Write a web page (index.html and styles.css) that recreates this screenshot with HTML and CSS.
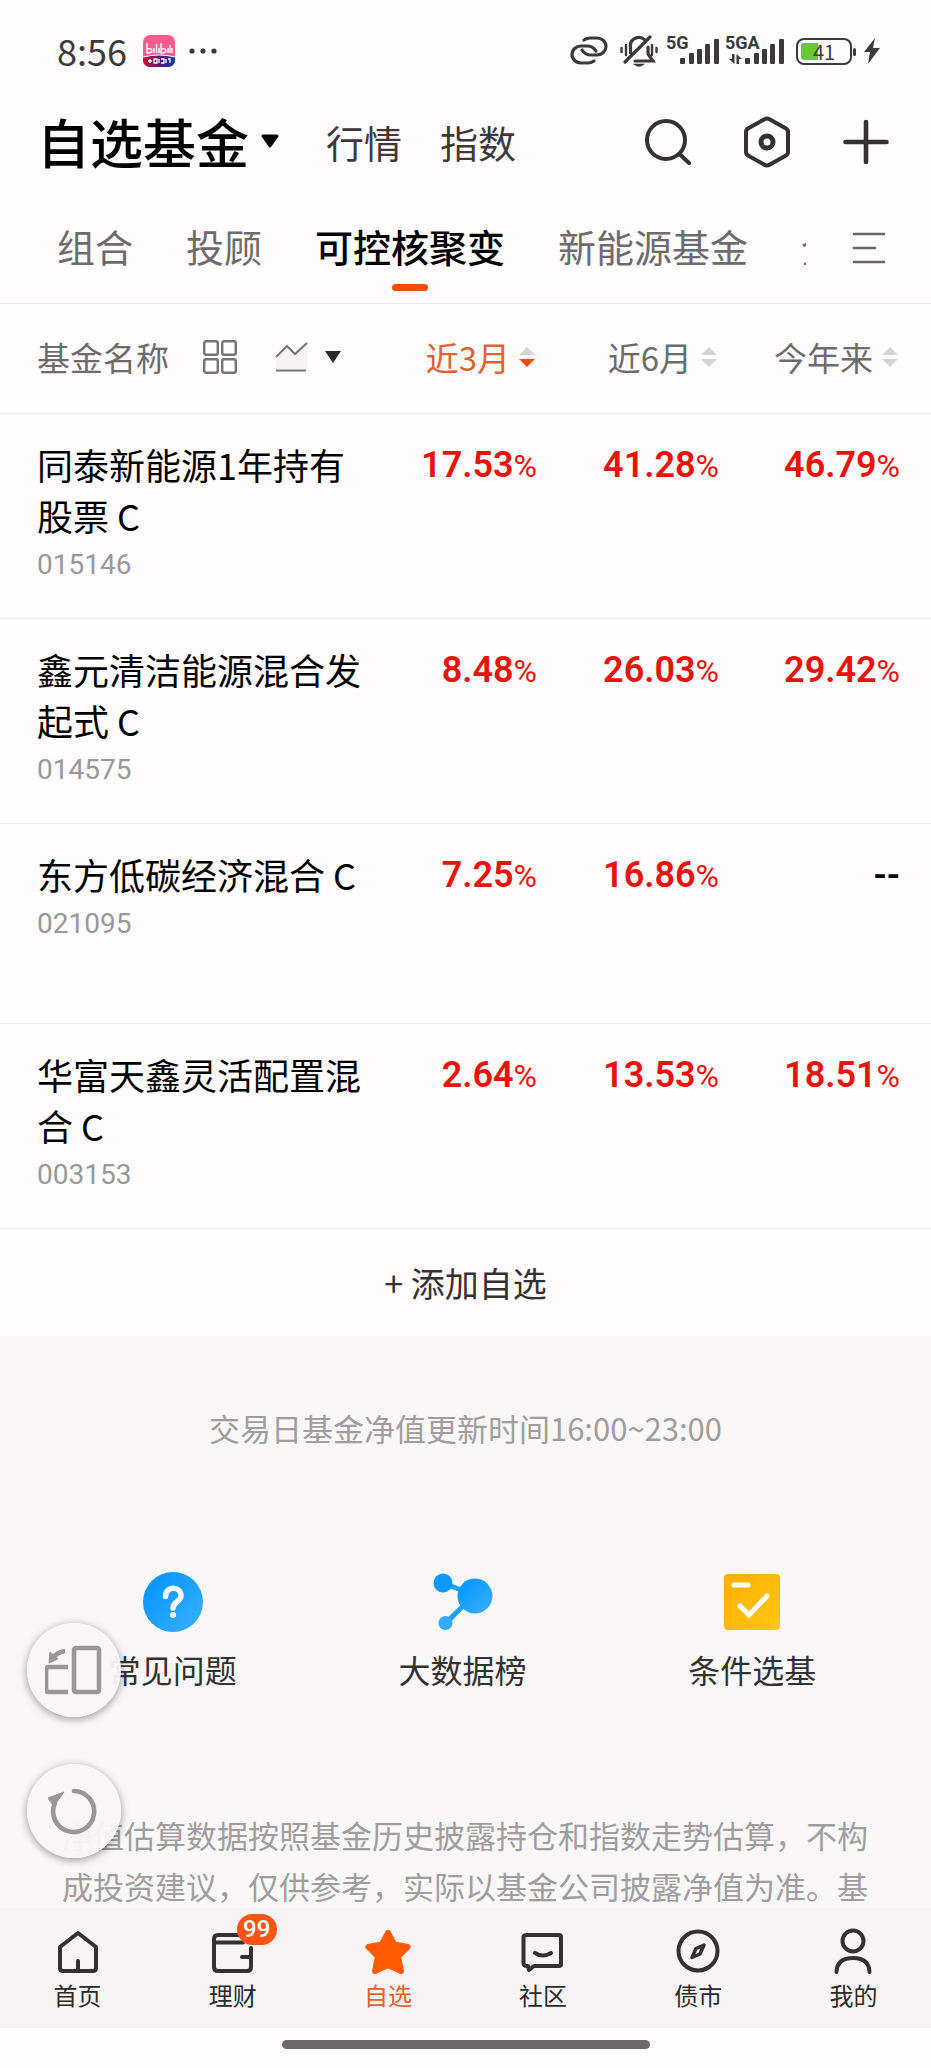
FILE: index.html
```html
<!DOCTYPE html>
<html lang="zh-CN">
<head>
    <meta charset="UTF-8">
    <meta name="viewport" content="width=device-width, initial-scale=1.0">
    <title>自选基金</title>
    <link rel="stylesheet" href="styles.css">
</head>
<body>
    <div class="status-bar">
        <span class="time">8:56</span>
        <svg class="app-icon" width="32" height="32" viewBox="0 0 32 32">
            <defs>
                <linearGradient id="band" x1="0" x2="1">
                    <stop offset="0" stop-color="#d0103c"/>
                    <stop offset="0.5" stop-color="#5a1a70"/>
                    <stop offset="1" stop-color="#0a3cb0"/>
                </linearGradient>
                <clipPath id="app-clip"><rect width="32" height="32" rx="7"/></clipPath>
            </defs>
            <g clip-path="url(#app-clip)">
                <rect width="32" height="32" fill="#fb5b91"/>
                <path d="M0 22Q16 18 32 22V32H0Z" fill="url(#band)"/>
                <path d="M0 22Q16 18 32 22" fill="none" stroke="#fff" stroke-width="1"/>
            </g>
            <path d="M4 8V18Q9 18 9 15.500T4 14M11 13V18M13.500 9V18M16 13V18M18 8V18Q23 18 23 15.500T18 14M25 13V18M27 10V18M29 13V18" fill="none" stroke="#fff" stroke-width="1.400"/>
            <path d="M5 26H9M7 24V28M11 24H14V28H11ZM16 24V28M18 24H21V28H18M23 24V28M25 24H27V28" fill="none" stroke="#fff" stroke-width="1.300"/>
        </svg>
        <svg class="dots" width="28" height="6" viewBox="0 0 28 6" fill="#3d3a3b">
            <circle cx="3" cy="3" r="2.600"/><circle cx="14" cy="3" r="2.600"/><circle cx="25" cy="3" r="2.600"/>
        </svg>
        <div class="status-icons">
            <svg width="38" height="30" viewBox="0 0 38 30" fill="none" stroke="#3d3a3b" stroke-width="3.200" stroke-linecap="round">
                <path d="M14 4Q17 2 20 2H27A9 8.500 0 0 1 27 19H21Q15 19 12 14"/>
                <path d="M24 25Q21 27 18 27H11A9 8.500 0 0 1 11 10H17Q23 10 26 15"/>
            </svg>
            <svg width="38" height="32" viewBox="0 0 38 32" fill="none" stroke="#3d3a3b" stroke-width="3.200" stroke-linecap="round">
                <path d="M1.500 13V17M6 10V20M32 10V20M36.500 13V17" stroke-width="2.400"/>
                <path d="M10.500 18V12A8.500 8.500 0 0 1 25 5M28 12V19L33 26H15M5 27L30 2"/>
                <path d="M15 29.500Q19 32.500 23 29.500Z" fill="#3d3a3b" stroke-width="1.500"/>
            </svg>
            <span class="net">
                <span class="net-label">5G</span>
                <svg width="39" height="25" viewBox="0 0 39 25" fill="#3d3a3b">
                    <rect x="0" y="19" width="5" height="6" rx="1"/><rect x="9" y="14" width="5" height="11" rx="1"/><rect x="17" y="10" width="5" height="15" rx="1"/><rect x="25" y="5" width="5" height="20" rx="1"/><rect x="34" y="0" width="5" height="25" rx="1"/>
                </svg>
            </span>
            <span class="net net-wide">
                <span class="net-label">5GA</span>
                <svg width="55" height="25" viewBox="0 0 55 25" fill="#3d3a3b">
                    <path d="M0 20H3V15H5.500V25ZM13 20H10V25H7.500V15Z"/>
                    <rect x="16" y="19" width="5" height="6" rx="1"/><rect x="25" y="14" width="5" height="11" rx="1"/><rect x="33" y="10" width="5" height="15" rx="1"/><rect x="41" y="5" width="5" height="20" rx="1"/><rect x="50" y="0" width="5" height="25" rx="1"/>
                </svg>
            </span>
            <span class="battery"><span class="battery-level">41</span></span>
            <svg width="16" height="26" viewBox="0 0 16 26" fill="#3d3a3b"><path d="M11 0L0 14H6L4 26L16 10H9Z"/></svg>
        </div>
    </div>

    <header class="header">
        <button class="title">自选基金
            <svg width="18" height="14" viewBox="0 0 18 14"><path d="M2 2H16L9 12Z" fill="#000" stroke="#000" stroke-width="3" stroke-linejoin="round"/></svg>
        </button>
        <a class="head-link" href="#">行情</a>
        <a class="head-link" href="#">指数</a>
        <div class="head-actions">
            <button aria-label="搜索">
                <svg width="46" height="46" viewBox="0 0 46 46" fill="none" stroke="#353132" stroke-width="4" stroke-linecap="round"><circle cx="21" cy="21" r="19"/><path d="M34.500 35L44 44"/></svg>
            </button>
            <button aria-label="设置">
                <svg width="46" height="52" viewBox="0 0 46 52" fill="none" stroke="#353132" stroke-linejoin="round"><path d="M20.500 3.200Q23 1.700 25.500 3.200L42 12.500Q44 13.700 44 16V36Q44 38.300 42 39.500L25.500 48.800Q23 50.300 20.500 48.800L4 39.500Q2 38.300 2 36V16Q2 13.700 4 12.500Z" stroke-width="4"/><circle cx="23" cy="26" r="6" stroke-width="5"/></svg>
            </button>
            <button aria-label="添加">
                <svg width="46" height="46" viewBox="0 0 46 46" stroke="#353132" stroke-width="4.600" stroke-linecap="round"><path d="M23 3V43M2.500 23H43.500"/></svg>
            </button>
        </div>
    </header>

    <nav class="tabs">
        <div class="tab-list">
            <a href="#">组合</a>
            <a href="#">投顾</a>
            <a href="#" class="active">可控核聚变</a>
            <a href="#">新能源基金</a>
            <a href="#">全部</a>
        </div>
        <button class="tab-menu" aria-label="分组">
            <svg width="34" height="32" viewBox="0 0 34 32" stroke="#6a6667" stroke-width="2.600" stroke-linecap="round"><path d="M2 2H32M2 16H23M2 30H32"/></svg>
        </button>
    </nav>

    <main class="content">
        <table class="funds">
            <colgroup><col><col class="col-a"><col class="col-b"><col class="col-c"></colgroup>
            <thead>
                <tr>
                    <th>
                        <div class="name-head">
                            <span>基金名称</span>
                            <svg class="grid-icon" width="34" height="34" viewBox="0 0 34 34" fill="none" stroke="#777374" stroke-width="2.400"><rect x="1.200" y="1.200" width="13.600" height="13.600" rx="2"/><rect x="19.200" y="1.200" width="13.600" height="13.600" rx="2"/><rect x="1.200" y="19.200" width="13.600" height="13.600" rx="2"/><rect x="19.200" y="19.200" width="13.600" height="13.600" rx="2"/></svg>
                            <svg class="chart-icon" width="33" height="30" viewBox="0 0 33 30" fill="none" stroke="#777374" stroke-width="2"><path d="M1 15L12 4L20 12L32 1V27H1Z" fill="#f7f3f4" stroke="none"/><path d="M1 15L12 4L20 12L32 1M1 28.500H31"/></svg>
                            <svg width="16" height="12" viewBox="0 0 16 12"><path d="M0 0H16L8 12Z" fill="#2c292a"/></svg>
                        </div>
                    </th>
                    <th class="num sorted"><button>近3月<svg width="16" height="20" viewBox="0 0 16 20"><path d="M0 8L8 0L16 8Z" fill="#d6d3d4"/><path d="M0 12H16L8 20Z" fill="#fa4b0e"/></svg></button></th>
                    <th class="num"><button>近6月<svg width="16" height="20" viewBox="0 0 16 20" fill="#d6d3d4"><path d="M0 8L8 0L16 8ZM0 12H16L8 20Z"/></svg></button></th>
                    <th class="num"><button>今年来<svg width="16" height="20" viewBox="0 0 16 20" fill="#d6d3d4"><path d="M0 8L8 0L16 8ZM0 12H16L8 20Z"/></svg></button></th>
                </tr>
            </thead>
            <tbody>
                <tr>
                    <td><div class="fund-name">同泰新能源1年持有股票 C</div><div class="fund-code">015146</div></td>
                    <td class="num">17.53<span>%</span></td>
                    <td class="num">41.28<span>%</span></td>
                    <td class="num">46.79<span>%</span></td>
                </tr>
                <tr>
                    <td><div class="fund-name">鑫元清洁能源混合发起式 C</div><div class="fund-code">014575</div></td>
                    <td class="num">8.48<span>%</span></td>
                    <td class="num">26.03<span>%</span></td>
                    <td class="num">29.42<span>%</span></td>
                </tr>
                <tr>
                    <td><div class="fund-name">东方低碳经济混合 C</div><div class="fund-code">021095</div></td>
                    <td class="num">7.25<span>%</span></td>
                    <td class="num">16.86<span>%</span></td>
                    <td class="num none">--</td>
                </tr>
                <tr>
                    <td><div class="fund-name">华富天鑫灵活配置混合 C</div><div class="fund-code">003153</div></td>
                    <td class="num">2.64<span>%</span></td>
                    <td class="num">13.53<span>%</span></td>
                    <td class="num">18.51<span>%</span></td>
                </tr>
            </tbody>
        </table>
        <button class="add-fund">+ 添加自选</button>

        <div class="more">
            <p class="update-time">交易日基金净值更新时间16:00~23:00</p>
            <div class="tools">
                <a href="#">
                    <svg width="62" height="62" viewBox="0 0 62 62">
                        <defs><linearGradient id="blue" x1="0" y1="0" x2="1" y2="1"><stop offset="0.200" stop-color="#0b99ff"/><stop offset="1" stop-color="#3cb0ff"/></linearGradient></defs>
                        <circle cx="31" cy="31" r="30" fill="url(#blue)"/>
                        <path d="M23.500 25.500C23.500 14 39 15.500 39 24.500C39 31 31.500 30 31 37" fill="none" stroke="#fff" stroke-width="5.500" stroke-linecap="round"/>
                        <circle cx="31" cy="44" r="3" fill="#fff"/>
                    </svg>
                    <span>常见问题</span>
                </a>
                <a href="#">
                    <svg width="62" height="62" viewBox="0 0 62 62">
                        <path d="M11 12L42 24L14 52" fill="none" stroke="#1fa2ff" stroke-width="5"/>
                        <circle cx="11" cy="12" r="9.500" fill="#0b99ff"/>
                        <circle cx="43" cy="25" r="17.500" fill="url(#blue)"/>
                        <circle cx="13.500" cy="52" r="7" fill="#33abff"/>
                    </svg>
                    <span>大数据榜</span>
                </a>
                <a href="#">
                    <svg width="62" height="62" viewBox="0 0 62 62" fill="none" stroke="#fff" stroke-linecap="round">
                        <defs><linearGradient id="gold" x1="0" y1="0" x2="1" y2="1"><stop offset="0" stop-color="#ffad05"/><stop offset="1" stop-color="#ffc814"/></linearGradient></defs>
                        <rect x="3" y="3" width="56" height="56" rx="4" fill="url(#gold)" stroke="none"/>
                        <path d="M13 14H27" stroke-width="5"/>
                        <path d="M19 35L28 44L46 25" stroke-width="5"/>
                    </svg>
                    <span>条件选基</span>
                </a>
            </div>
            <p class="disclaimer">净值估算数据按照基金历史披露持仓和指数走势估算，不构成投资建议，仅供参考，实际以基金公司披露净值为准。基</p>
        </div>

        <!-- 悬浮按钮 -->
        <div class="float-buttons">
            <button aria-label="旋转屏幕">
                <svg width="58" height="50" viewBox="2 0 58 50" fill="none" stroke="#9b9798" stroke-width="4.600" stroke-linejoin="round"><rect x="31" y="3" width="25" height="44" rx="2"/><path d="M25 22H6Q3 22 3 25V44Q3 47 6 47H25"/><path d="M22 6Q14 7 9 14"/><path d="M7 7L6 18L15 14Z" fill="#9b9798" stroke-width="1"/></svg>
            </button>
            <button aria-label="刷新">
                <svg width="52" height="48" viewBox="2 0 52 48" fill="none" stroke="#9b9798" stroke-width="4.600" stroke-linecap="round"><path d="M28 4A20.500 20.500 0 1 1 9 16"/><path d="M2 11L18 5L8 19Z" fill="#9b9798" stroke-width="1"/></svg>
            </button>
        </div>
    </main>

    <nav class="bottom-nav">
        <a href="#">
            <svg width="48" height="48" viewBox="0 0 48 48" fill="none" stroke="#353132" stroke-width="4" stroke-linecap="round" stroke-linejoin="round"><path d="M24 5L42 19V40Q42 43 39 43H9Q6 43 6 40V19ZM24 33V42"/></svg>
            <span>首页</span>
        </a>
        <a href="#">
            <svg width="48" height="48" viewBox="0 0 48 48" fill="none" stroke="#353132" stroke-width="4" stroke-linecap="round" stroke-linejoin="round"><path d="M38 7H9Q5 7 5 11V39Q5 43 9 43H38Q42 43 42 39V20M5 14.500H34M42 29H33"/></svg>
            <span>理财</span>
            <b class="badge">99</b>
        </a>
        <a href="#" class="active">
            <svg width="48" height="48" viewBox="0 0 48 48" fill="#ff5a00" stroke="#ff5a00" stroke-width="6" stroke-linejoin="round"><path d="M24 5L30 16.500L43.500 19L34 28L37 43L24 37L11 43L14 28L4.500 19L18 16.500Z"/></svg>
            <span>自选</span>
        </a>
        <a href="#">
            <svg width="48" height="48" viewBox="0 0 48 48" fill="none" stroke="#353132" stroke-width="4" stroke-linecap="round" stroke-linejoin="round"><path d="M8 7H40Q42 7 42 9V36Q42 38 40 38H15L10 42L9 38H8Q4.500 38 4.500 35V9Q4.500 7 8 7ZM16 25Q24 30 32 25"/></svg>
            <span>社区</span>
        </a>
        <a href="#">
            <svg width="48" height="48" viewBox="0 0 48 48" fill="none" stroke="#353132" stroke-width="4"><circle cx="24" cy="23" r="19.500"/><path d="M30 17L26 26L18 29.500L22 20.500Z" stroke-width="3.500" stroke-linejoin="round"/></svg>
            <span>债市</span>
        </a>
        <a href="#">
            <svg width="48" height="48" viewBox="0 0 48 48" fill="none" stroke="#353132" stroke-width="4" stroke-linecap="round"><circle cx="24" cy="13" r="10.500"/><path d="M7.500 44Q8 30 24 30T40.500 44"/></svg>
            <span>我的</span>
        </a>
    </nav>
    <div class="home-bar"></div>
</body>
</html>
```

FILE: styles.css
```css
* {
    box-sizing: border-box;
}

body {
    margin: 0;
    height: 100vh;
    display: flex;
    flex-direction: column;
    background: #fefcfd;
    color: #000;
    font-family: "Noto Sans CJK SC", sans-serif;
}

a {
    color: inherit;
    text-decoration: none;
}

button {
    margin: 0;
    padding: 0;
    border: none;
    background: none;
    color: inherit;
    font: inherit;
    cursor: pointer;
}

svg {
    display: block;
    flex-shrink: 0;
}

/* 状态栏 */
.status-bar {
    display: flex;
    align-items: center;
    height: 102px;
    padding: 0 51px 0 57px;
    color: #3d3a3b;
}

.time {
    padding-bottom: 2px;
    font-size: 36px;
}

.app-icon {
    margin-left: 16px;
}

.dots {
    margin-left: 14px;
}

.status-icons {
    display: flex;
    align-items: center;
    gap: 12px;
    margin-left: auto;
}

.net {
    position: relative;
    display: flex;
    justify-content: flex-end;
    align-items: flex-end;
    width: 53px;
    height: 26px;
    margin-left: -4px;
}

.net-wide {
    width: 59px;
    margin-left: -6px;
}

.net-label {
    position: absolute;
    left: 0;
    top: -5px;
    font-family: Roboto, sans-serif;
    font-size: 18px;
    line-height: 20px;
    font-weight: 700;
}

.battery {
    position: relative;
    width: 56px;
    height: 27px;
    padding: 3px;
    border: 2px solid #3d3a3b;
    border-radius: 8px;
}

.battery::after {
    content: "";
    position: absolute;
    right: -6px;
    top: 8px;
    width: 3px;
    height: 8px;
    border-radius: 2px;
    background: #3d3a3b;
}

.battery-level {
    display: block;
    height: 17px;
    border-radius: 3px;
    background: linear-gradient(to right, #67c82f 36%, transparent 36%);
    font-size: 20px;
    line-height: 18px;
    text-align: center;
}

/* 顶部标题 */
.header {
    display: flex;
    align-items: center;
    height: 80px;
    padding: 0 42px 0 37px;
}

.title {
    display: flex;
    align-items: center;
    gap: 12px;
    margin-right: 47px;
    padding-bottom: 2px;
    font-size: 53px;
    line-height: 76px;
    font-weight: 500;
}

.head-link {
    margin-right: 38px;
    padding-bottom: 2px;
    font-size: 38px;
    color: #3d393a;
}

.head-actions {
    display: flex;
    align-items: center;
    gap: 53px;
    margin-left: auto;
}

/* 分组标签 */
.tabs {
    display: flex;
    align-items: center;
    height: 122px;
    padding: 0 45px 0 57px;
    border-bottom: 1px solid #efebed;
}

.tab-list {
    display: flex;
    flex: 1;
    gap: 53px;
    height: 100%;
    overflow: hidden;
    color: #6f6b6c;
    font-size: 38px;
    line-height: 128px;
    white-space: nowrap;
}

.tab-list a {
    flex-shrink: 0;
}

.tab-list .active {
    position: relative;
    color: #000;
    font-weight: 500;
}

.tab-list .active::after {
    content: "";
    position: absolute;
    left: 50%;
    bottom: 12px;
    width: 36px;
    height: 7px;
    margin-left: -18px;
    border-radius: 4px;
    background: #fa4b0e;
}

.tab-menu {
    margin: 10px 0 0 46px;
}

/* 基金列表 */
.content {
    position: relative;
    flex: 1;
    min-height: 0;
    overflow: hidden;
    background: #faf7f8;
}

.funds {
    width: 100%;
    table-layout: fixed;
    border-collapse: collapse;
    background: #fefcfd;
}

.col-a {
    width: 158px;
}

.col-b {
    width: 182px;
}

.col-c {
    width: 212px;
}

.funds th,
.funds td {
    padding: 0;
    border-bottom: 1px solid #f1edef;
    text-align: left;
    vertical-align: top;
}

.funds th {
    height: 109px;
    padding-bottom: 2px;
    vertical-align: middle;
    font-size: 33px;
    font-weight: 400;
    color: #6f6b6c;
}

.funds tr > :first-child {
    padding-left: 37px;
}

.funds tr > :last-child {
    padding-right: 31px;
}

.name-head {
    display: flex;
    align-items: center;
}

.grid-icon {
    margin-left: 34px;
}

.chart-icon {
    margin: 0 17px 0 38px;
}

.funds th button {
    display: flex;
    align-items: center;
    gap: 9px;
    margin-left: auto;
    padding-right: 2px;
}

.funds th.sorted {
    color: #e2632f;
}

.funds td {
    height: 200px;
    padding: 25px 0 29px;
}

.funds td.num {
    padding-top: 28px;
    color: #e8140c;
    font-family: Roboto, sans-serif;
    font-size: 36px;
    line-height: 46px;
    font-weight: 600;
    text-align: right;
}

.funds td.num span {
    font-size: 32px;
    font-weight: 400;
}

.funds td.none {
    color: #000;
}

.fund-name {
    font-size: 36px;
    line-height: 51px;
}

.fund-code {
    color: #9b9899;
    font-family: Roboto, sans-serif;
    font-size: 28px;
    line-height: 48px;
}

.add-fund {
    display: block;
    width: 100%;
    height: 107px;
    background: #fefcfd;
    color: #353132;
    font-size: 34px;
}

/* 说明与工具 */
.more {
    padding: 66px 62px 0;
    color: #a19d9e;
    font-size: 31px;
    line-height: 51px;
}

.more p {
    margin: 0;
}

.update-time {
    text-align: center;
}

.tools {
    display: flex;
    margin: 118px -28px 114px -34px;
}

.tools a {
    display: flex;
    flex: 1;
    flex-direction: column;
    align-items: center;
    gap: 11px;
    color: #353132;
    font-size: 32px;
}

.float-buttons {
    position: absolute;
    left: 27px;
    bottom: 50px;
    display: flex;
    flex-direction: column;
    gap: 47px;
}

.float-buttons button {
    display: flex;
    align-items: center;
    justify-content: center;
    width: 94px;
    height: 94px;
    border-radius: 50%;
    background: rgba(248, 246, 247, 0.95);
    box-shadow: 0 2px 8px rgba(0, 0, 0, 0.4);
}

/* 底部导航 */
.bottom-nav {
    display: flex;
    height: 120px;
    background: #f7f4f5;
    color: #2c292a;
    font-size: 24px;
    line-height: 34px;
}

.bottom-nav a {
    position: relative;
    display: flex;
    flex: 1;
    flex-direction: column;
    align-items: center;
    gap: 2px;
    padding-top: 20px;
}

.bottom-nav .active {
    color: #e8602a;
}

.badge {
    position: absolute;
    left: 50%;
    top: 6px;
    width: 40px;
    height: 31px;
    margin-left: 4px;
    border-radius: 16px;
    background: #fa5514;
    color: #fff;
    font-family: Roboto, sans-serif;
    font-size: 24px;
    line-height: 31px;
    font-weight: 500;
    text-align: center;
}

.home-bar {
    height: 40px;
    padding-top: 12px;
}

.home-bar::before {
    content: "";
    display: block;
    width: 368px;
    height: 9px;
    margin: 0 auto;
    border-radius: 5px;
    background: #6e6a6b;
}
```
